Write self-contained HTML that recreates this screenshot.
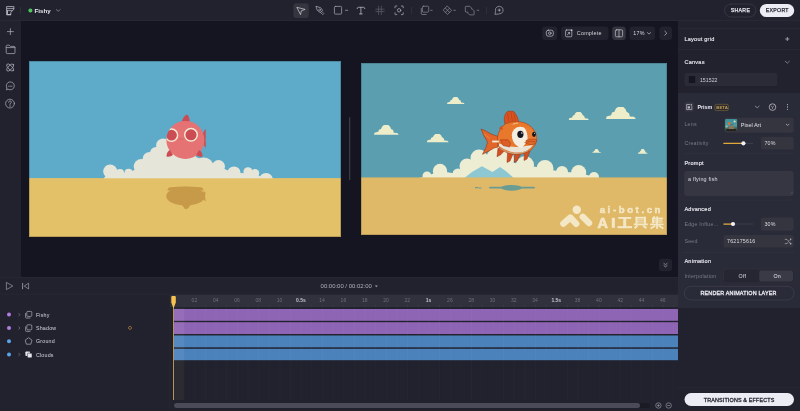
<!DOCTYPE html>
<html><head><meta charset="utf-8">
<style>
*{box-sizing:border-box;margin:0;padding:0}
html,body{width:800px;height:411px;overflow:hidden;background:#151522;font-family:"Liberation Sans",sans-serif}
svg{position:absolute;left:0;top:0;will-change:transform}
text{font-family:"Liberation Sans",sans-serif}
</style></head><body>
<svg width="800" height="411" viewBox="0 0 800 411">
<!-- ===== PANELS ===== -->
<rect x="0" y="0" width="800" height="411" fill="#151522"/>
<rect x="0" y="0" width="800" height="20" fill="#22222e"/>
<rect x="0" y="20" width="800" height="1" fill="#282834"/>
<rect x="0" y="21" width="21" height="256" fill="#22222e"/>
<rect x="678" y="21" width="122" height="390" fill="#22222e"/>
<rect x="0" y="277" width="678" height="134" fill="#22222e"/>

<!-- ===== TOP BAR ===== -->
<g id="topbar" fill="none" stroke="#c9c9d3" stroke-width="0.8" stroke-linecap="round" stroke-linejoin="round">
  <!-- logo -->
  <path d="M7 6.6H13.9V9.2L10.8 12.4V14.8H7Z" stroke-width="0.75"/>
  <path d="M7.2 8.6H13.6M7.2 10.6H12" stroke-width="0.7"/>
  <path d="M7.4 10.8V14.6H10.6" stroke-width="0.9"/>
  <rect x="20.3" y="7" width="0.7" height="7" fill="#393945" stroke="none"/>
  <circle cx="30.4" cy="10.6" r="2" fill="#4cc75a" stroke="none"/>
  <path d="M56.3 9.6L58.2 11.3L60.1 9.6" stroke="#9a9aa6" stroke-width="0.7"/>
  <!-- toolbar -->
  <rect x="293.4" y="3.2" width="15.3" height="14.9" rx="3" fill="#35353f" stroke="none"/>
  <path d="M297.2 7.4L305.1 9.4L301.4 10.8L300.6 14.2Z" stroke="#d4d4de" stroke-width="0.7"/>
  <!-- pen -->
  <path d="M316.3 6.4L320.6 7.7L322.6 10.3L320.3 12.6L317.6 10.6Z" stroke="#b4b4c0" stroke-width="0.7"/>
  <circle cx="319.6" cy="9.9" r="0.9" stroke="#b4b4c0" stroke-width="0.6"/>
  <path d="M321.6 11.3L323.9 13.6L322.8 14.7L320.5 12.4" stroke="#b4b4c0" stroke-width="0.6"/>
  <!-- rect -->
  <rect x="334.4" y="6.4" width="7.2" height="7.7" rx="1" stroke="#9d9da9" stroke-width="0.8"/>
  <path d="M345.4 10.3H347.8" stroke="#a4a4b0" stroke-width="0.7"/>
  <!-- T -->
  <path d="M357.2 8.6Q357.2 7.3 358.4 7.3H363.6Q364.8 7.3 364.8 8.6M360.9 7.3V13.9M359.5 13.9H362.3" stroke="#b4b4c0" stroke-width="0.8"/>
  <!-- grid -->
  <path d="M378.6 6.2V14.6M381.3 6.2V14.6M375.8 9.2H384.2M375.8 11.6H384.2" stroke="#707080" stroke-width="0.55" stroke-dasharray="0.8 0.8"/>
  <!-- focus -->
  <path d="M395 7.8V6.4Q395 6 395.4 6H396.8M401.4 6H402.8Q403.2 6 403.2 6.4V7.8M403.2 12.8V14.2Q403.2 14.6 402.8 14.6H401.4M396.8 14.6H395.4Q395 14.6 395 14.2V12.8" stroke="#a4a4b0" stroke-width="0.8"/>
  <circle cx="399.1" cy="10.3" r="1.7" stroke="#a4a4b0" stroke-width="0.8"/>
  <rect x="411.3" y="7" width="0.6" height="7" fill="#393945" stroke="none"/>
  <g stroke="#8d8d99" stroke-width="0.7">
  <!-- layers -->
  <rect x="422.4" y="6.2" width="6.3" height="6" rx="1"/>
  <path d="M421.3 8.4V13.6Q421.3 14.5 422.2 14.5H426.2"/>
  <path d="M430.6 10.3H432.2"/>
  <!-- component -->
  <path d="M447.5 6.2L451.6 10.3L447.5 14.4L443.4 10.3Z"/>
  <path d="M445.45 8.25L449.55 12.35M449.55 8.25L445.45 12.35"/>
  <path d="M453.8 10.3H455.4"/>
  <!-- boolean -->
  <path d="M465.3 7Q465.3 6.3 466 6.3H469.8L471.6 8.1V9.1H472.4L474.1 10.8V14.2Q474.1 14.9 473.4 14.9H469.6L467.8 13.1V12.1H466Q465.3 12.1 465.3 11.4Z"/>
  <path d="M477.2 10.3H478.8"/>
  </g>
  <rect x="486.2" y="7" width="0.6" height="7" fill="#393945" stroke="none"/>
  <!-- comment -->
  <path d="M495 14L495.6 11.2Q494.8 8.2 497.2 6.8Q499.6 5.6 501.8 7.2Q503.6 8.8 503 11.4Q502 14 499 14Z" stroke="#a9a9b5" stroke-width="0.7"/>
  <path d="M499.3 8.9V11.3M498.1 10.1H500.5" stroke="#c4c4ce" stroke-width="0.6"/>
  <!-- share / export -->
  <rect x="724.5" y="4" width="31.4" height="13" rx="6.5" stroke="#3a3a48" stroke-width="0.8"/>
  <rect x="759.8" y="4" width="34.4" height="13" rx="6.5" fill="#ececf4" stroke="none"/>
</g>
<text x="34.6" y="13" font-size="6.2" font-weight="bold" fill="#e8e8f0">Fishy</text>
<text x="730.8" y="12.4" font-size="5.2" fill="#e4e4ec" stroke="#e4e4ec" stroke-width="0.25" letter-spacing="0.3">SHARE</text>
<text x="765.8" y="12.4" font-size="5.2" fill="#262632" stroke="#262632" stroke-width="0.25" letter-spacing="0.3">EXPORT</text>

<!-- ===== LEFT SIDEBAR ===== -->
<g fill="none" stroke="#a9a9b5" stroke-width="0.75" stroke-linecap="round" stroke-linejoin="round">
  <path d="M10.4 28.6V34.6M7.4 31.6H13.4"/>
  <path d="M6.2 46.2Q6.2 45.2 7.2 45.2H9.2L10.4 46.4H14Q15 46.4 15 47.4V52.6Q15 53.6 14 53.6H7.2Q6.2 53.6 6.2 52.6Z"/>
  <path d="M6.2 47.6H15"/>
  <ellipse cx="10.2" cy="67.5" rx="4.6" ry="2" transform="rotate(45 10.2 67.5)"/>
  <ellipse cx="10.2" cy="67.5" rx="4.6" ry="2" transform="rotate(-45 10.2 67.5)"/>
  <path d="M6.6 89.6L6.9 88A4 4 0 1 1 8.2 89.3Z"/>
  <path d="M8.3 86.2H8.5M9.6 86.2H12" stroke-width="0.7"/>
  <circle cx="10" cy="103.6" r="4.4"/>
  <path d="M8.6 102.4Q8.6 100.9 10 100.9Q11.4 100.9 11.4 102.2Q11.4 103.1 10 103.7V104.5" stroke-width="0.7"/>
  <circle cx="10" cy="106" r="0.2" stroke-width="0.6"/>
</g>

<!-- ===== CANVAS ===== -->
<defs>
  <clipPath id="clipL"><rect x="29" y="61" width="312" height="176"/></clipPath>
  <clipPath id="clipR"><rect x="361" y="63" width="306" height="172"/></clipPath>
</defs>
<g clip-path="url(#clipL)">
  <rect x="29" y="61" width="312" height="176" fill="#5eaac9"/>
  <rect x="29" y="178.3" width="312" height="59" fill="#e3c168"/>
  <g fill="#e6e5d9">
    <circle cx="110.2" cy="171.4" r="7"/>
    <circle cx="120" cy="173" r="4.1"/>
    <circle cx="128.6" cy="172.8" r="4.1"/>
    <circle cx="141.3" cy="166.5" r="7.6"/>
    <circle cx="149.8" cy="159.2" r="7.3"/>
    <circle cx="156" cy="153" r="6"/>
    <circle cx="163.2" cy="145.6" r="7.1"/>
    <circle cx="185" cy="150" r="12"/>
    <circle cx="203.5" cy="168" r="10.6"/>
    <circle cx="218.5" cy="166.6" r="6.5"/>
    <circle cx="234" cy="173" r="6.6"/>
    <circle cx="248" cy="171.8" r="4.6"/>
    <circle cx="255" cy="173.2" r="4.2"/>
    <circle cx="266" cy="180" r="7"/>
    <path d="M110.2 171.4L120 173L128.6 172.8L141.3 166.5L149.8 159.2L163.2 145.6L190 146L196 157L218.5 166.6L234 173L255 173.2L266 180L266 179L103 179Z"/>
  </g>
  <rect x="29" y="178.3" width="312" height="59" fill="#e3c168"/>
  <!-- shadow -->
  <g fill="#c79a49">
    <ellipse cx="185.6" cy="196.2" rx="19.3" ry="9.4"/>
    <path d="M167.6 190.6Q167.4 187.4 170.5 187.2Q185.5 185.6 200.5 187.2Q203.6 187.4 203.6 190.6Z"/>
    <path d="M203.5 191L205.6 192.6L205 196.8L205.8 201.2L203 199.5Z"/>
    <path d="M181 204.6Q183.4 206 184.4 208.4Q186.6 209.8 188.6 207.8Q189.2 205.8 191.8 204.6Z"/>
  </g>
  <!-- fish -->
  <defs><clipPath id="fishBody"><circle cx="185.4" cy="139.9" r="19"/></clipPath></defs>
  <g>
    <path d="M181.5 122.5Q183 116 187.2 114.6Q189.8 117 189.6 122.5Z" fill="#cb4c53"/>
    <path d="M203 133Q205.2 129 205.8 129Q205.4 139 205.9 148Q204.6 146 203 144Z" fill="#cb4c53"/>
    <circle cx="185.4" cy="139.9" r="19" fill="#e57373"/>
    <path d="M166.5 156.5Q166.5 151.5 170 150L173 155Q170 157.5 166.5 156.5Z" fill="#cb4c53"/>
    <path d="M202.6 156.5Q202.6 151.5 199 150L196.2 155Q199 157.5 202.6 156.5Z" fill="#cb4c53"/>
    <g clip-path="url(#fishBody)">
      <circle cx="171.5" cy="135.2" r="6.1" fill="#cb4c53" stroke="#f4e8d4" stroke-width="1.5"/>
    </g>
    <circle cx="191" cy="134.8" r="6.3" fill="#cb4c53" stroke="#f4e8d4" stroke-width="1.5"/>
    <path d="M179 138.9H183.4" stroke="#cf5a5f" stroke-width="0.5"/>
  </g>
  <rect x="29.5" y="61.5" width="311" height="175" fill="none" stroke="#000" stroke-opacity="0.18" stroke-width="1"/>
</g>

<!-- right image -->
<g clip-path="url(#clipR)">
  <rect x="361" y="63" width="306" height="172" fill="#5b9eb0"/>
  <!-- small clouds -->
  <g fill="#eeedc9">
    <polygon points="374.0,134.8 374.5,132.7 378.2,131.8 379.0,129.7 380.9,128.9 382.2,126.4 383.9,125.1 388.4,125.1 390.1,126.7 391.1,128.9 393.1,130.1 393.8,132.7 397.3,133.1 398.8,134.8"/>
    <polygon points="447.0,104.0 447.4,102.5 450.0,101.8 450.5,100.3 451.9,99.7 452.8,97.9 454.0,97.0 457.2,97.0 458.4,98.2 459.1,99.7 460.6,100.6 461.1,102.5 463.5,102.7 464.6,104.0"/>
    <polygon points="426.9,142.2 427.3,140.4 430.6,139.6 431.3,137.8 433.0,137.1 434.1,135.0 435.6,133.9 439.5,133.9 441.1,135.3 441.9,137.1 443.7,138.2 444.3,140.4 447.4,140.7 448.7,142.2"/>
    <polygon points="568.8,120.0 569.2,118.2 572.2,117.5 572.8,115.8 574.4,115.1 575.4,113.0 576.8,112.0 580.5,112.0 581.9,113.4 582.7,115.1 584.3,116.2 584.9,118.2 587.7,118.6 588.9,120.0"/>
    <polygon points="606.0,119.0 606.6,116.4 611.1,115.3 612.0,112.6 614.4,111.7 615.9,108.6 618.0,107.0 623.3,107.0 625.4,109.0 626.6,111.7 629.0,113.2 629.9,116.4 634.1,116.8 635.9,119.0"/>
    <polygon points="592.4,152.8 592.6,151.9 593.8,151.6 594.1,150.7 594.8,150.4 595.2,149.4 595.8,148.9 597.3,148.9 597.9,149.6 598.3,150.4 598.9,150.9 599.2,151.9 600.4,152.1 600.9,152.8"/>
    <polygon points="638.1,153.7 638.3,152.6 639.7,152.2 640.0,151.2 640.8,150.8 641.2,149.5 641.9,148.9 643.6,148.9 644.3,149.7 644.7,150.8 645.4,151.4 645.7,152.6 647.0,152.8 647.6,153.7"/>
  </g>
  <!-- big cloud -->
  <g fill="#ecedd2">
    <circle cx="427" cy="176" r="4.5"/>
    <circle cx="440" cy="171" r="7.2"/>
    <circle cx="458" cy="174" r="5.5"/>
    <circle cx="467" cy="166" r="7.5"/>
    <circle cx="479" cy="158" r="8.5"/>
    <circle cx="500" cy="160" r="14"/>
    <circle cx="525" cy="165" r="9"/>
    <circle cx="545" cy="168.5" r="8.5"/>
    <circle cx="562" cy="172" r="6"/>
    <circle cx="578.7" cy="172.5" r="7.5"/>
    <circle cx="594" cy="177" r="5"/>
    <path d="M419.4 178L427 176L440 171L458 174L467 166L479 158L500 160L525 165L545 168.5L562 172L578.7 172.5L594 177L600 178Z"/>
  </g>
  <!-- mountain -->
  <path d="M464.4 178L472 172L481.9 166.3L492.5 172L500 166.9L507 172L513.8 178Z" fill="#8cc7d2"/>
  <!-- sand -->
  <rect x="361" y="177.4" width="306" height="58" fill="#dfb967"/>
  <path d="M361 177.6H419M600 177.6H667" stroke="#a7ab7c" stroke-width="0.8" stroke-dasharray="0.8 0.6"/>
  <!-- shadow -->
  <g fill="#6a9c94">
    <ellipse cx="511.5" cy="187.8" rx="10.5" ry="2.9"/>
    <rect x="489" y="186.8" width="46" height="1.6" rx="0.8"/>
    <rect x="475" y="187" width="3.5" height="1.2"/>
    <rect x="479" y="187.6" width="2.5" height="1"/>
  </g>
  <!-- fish -->
  <g stroke-linejoin="round">
    <!-- dorsal -->
    <path d="M504.6 123.5L504.2 118Q505 113 507.5 111.4Q511 110.6 514 111.6Q517 115 518.6 120.8L517 123.5Z" fill="#d9531f" stroke="#9a3516" stroke-width="0.5"/>
    <path d="M507.5 113L509 121.5M510.8 112L512.5 121.5M513.8 112.5L515.5 121.5" stroke="#b8401a" stroke-width="0.7"/>
    <!-- tail -->
    <path d="M498 136.5L491 134L485 130.5L481 129L484 136L487.5 142L486 147.5L482.5 154.3L489 151L494 148L498 147Z" fill="#e2652a" stroke="#9a3516" stroke-width="0.6"/>
    <path d="M484 134L490 138.5" stroke="#f08a45" stroke-width="0.8"/>
    <!-- bottom fins -->
    <path d="M498 148L497 156.8L501 154.5L505 150Z" fill="#d24f22" stroke="#9a3516" stroke-width="0.5"/>
    <path d="M507.5 153L507 162.5L510 161L513 154Z" fill="#d24f22" stroke="#9a3516" stroke-width="0.5"/>
    <path d="M515 153.5L514.2 162.3L517 161L520.5 154Z" fill="#d24f22" stroke="#9a3516" stroke-width="0.5"/>
    <path d="M524.5 152L524 160.5L527 159L530 151Z" fill="#d24f22" stroke="#9a3516" stroke-width="0.5"/>
    <!-- body -->
    <path d="M497.5 137Q499 128 506 123.5Q512 121.2 519 121.6Q527 122.5 532.5 128Q537 133 536.8 139.5Q536 146 530 151Q523 155 514 154.5Q504 153 499 147Q497 142 497.5 137Z" fill="#e8782c" stroke="#a83c18" stroke-width="0.6"/>
    <path d="M499 128.6L501.5 125.8L503 130Z" fill="#d24f22"/>
    <!-- belly -->
    <path d="M499 146Q504 150 512 152Q520 153.5 526 151Q531 148.5 533 145L526 146Q518 147.5 510 146.5Q504 145.5 499 143.5Z" fill="#e9e4d6"/>
    <path d="M500 148.5Q506 152.5 514 153.5Q522 154 528 150.5" stroke="#b9b3a5" stroke-width="0.8" fill="none"/>
    <!-- face white -->
    <circle cx="520.2" cy="135.2" r="8.4" fill="#f3eedf"/>
    <path d="M512 137Q513 146 522 148L526 143Q518 142 516 136Z" fill="#f3eedf"/>
    <!-- head top orange over white -->
    <path d="M523.5 126.6Q531 128 535.8 133.5L536.6 139.5Q531 140 527.6 138.5Q527.5 131 523.5 126.6Z" fill="#ea7e33"/>
    <!-- highlight streak -->
    <path d="M512.8 124.4Q515 123 518 123" stroke="#f7c99a" stroke-width="0.9" fill="none"/>
    <!-- eyes -->
    <ellipse cx="520.4" cy="134.3" rx="3.1" ry="3.6" fill="#15151d"/>
    <circle cx="521.8" cy="133" r="0.8" fill="#e8eef8"/>
    <ellipse cx="534" cy="134.3" rx="1.9" ry="2.6" fill="#15151d"/>
    <circle cx="534.5" cy="133.3" r="0.5" fill="#e8eef8"/>
    <!-- lips -->
    <path d="M526 140.5Q531 138.2 536.5 139.3Q537.3 142 535 144Q530 145.5 526 143.5Z" fill="#e06a2a" stroke="#9a3516" stroke-width="0.5"/>
    <path d="M527.5 141.8Q531 141 535.5 141.6" stroke="#9a3516" stroke-width="0.5" fill="none"/>
    <!-- side fin -->
    <path d="M500.4 139.8L508 139.8L510.5 143L509.5 147L503 145.5Z" fill="#dd5e26" stroke="#9a3516" stroke-width="0.5"/>
    <path d="M492.2 141.5H498.8" stroke="#f4ede0" stroke-width="1.8"/>
  </g>
  <!-- watermark -->
  <g fill="#f4e7c6">
    <circle cx="576.8" cy="209.7" r="4.2"/>
    <path d="M563.4 223.6L570.2 217.6L576.2 223.8" fill="none" stroke="#f4e7c6" stroke-width="6.4" stroke-linecap="round" stroke-linejoin="round"/>
    <path d="M582.8 216.8L589 223" fill="none" stroke="#f4e7c6" stroke-width="6.4" stroke-linecap="round"/>
    <text x="599.7" y="213.2" font-size="9.6" font-weight="bold" letter-spacing="2.6" stroke="#f4e7c6" stroke-width="0.45" font-family="Liberation Sans">ai-bot.cn</text>
    <text x="597.6" y="227.8" font-size="14.4" font-weight="bold" stroke="#f4e7c6" stroke-width="0.7" font-family="Liberation Sans">A</text>
    <rect x="611.8" y="217.8" width="3.1" height="10"/>
    <!-- 工 -->
    <rect x="618.4" y="217" width="12.8" height="1.9"/>
    <rect x="623.2" y="217" width="3" height="10"/>
    <rect x="617.5" y="226.1" width="14.5" height="2.1"/>
    <!-- 具 -->
    <rect x="635.5" y="216.8" width="10.5" height="1.8"/>
    <rect x="635.5" y="216.8" width="2" height="7"/>
    <rect x="644" y="216.8" width="2" height="7"/>
    <rect x="636.5" y="219.4" width="8" height="1"/>
    <rect x="636.5" y="221.4" width="8" height="1"/>
    <rect x="633.8" y="223.5" width="14" height="1.8"/>
    <path d="M637.4 225.5L634.6 228.2M643.2 225.5L646.4 228.2" stroke="#f4e7c6" stroke-width="2"/>
    <!-- 集 -->
    <path d="M654.6 216.2L653 218.6" stroke="#f4e7c6" stroke-width="1.6"/>
    <rect x="652" y="217.6" width="1.9" height="5.8"/>
    <rect x="653" y="217.6" width="10" height="1.4"/>
    <rect x="653" y="219.5" width="9.5" height="1.2"/>
    <rect x="653" y="221.4" width="9.5" height="1.2"/>
    <rect x="656.3" y="216.4" width="1.7" height="6"/>
    <rect x="650" y="223.6" width="13.5" height="1.6"/>
    <rect x="656.1" y="222" width="1.8" height="6.8"/>
    <path d="M655.4 225.4L650.6 228.4M658.6 225.4L663.4 228.4" stroke="#f4e7c6" stroke-width="1.8"/>
  </g>
  <rect x="361.5" y="63.5" width="305" height="171" fill="none" stroke="#000" stroke-opacity="0.15" stroke-width="1"/>
</g>
<!-- canvas scrollbar -->
<rect x="349" y="117" width="1.3" height="63" rx="0.6" fill="#3a3a48"/>

<!-- ===== RIGHT PANEL ===== -->
<rect x="678" y="28" width="122" height="0.8" fill="#2b2b37"/>
<text letter-spacing="0.22" x="684.4" y="40.9" font-size="5.6" fill="#e2e2ea" stroke="#e4e4ec" stroke-width="0.16">Layout grid</text>
<path d="M787.3 37V41M785.3 39H789.3" stroke="#b4b4c0" stroke-width="0.8"/>
<rect x="678" y="49.2" width="122" height="0.8" fill="#2b2b37"/>
<text letter-spacing="0.22" x="684.4" y="64.4" font-size="5.6" fill="#e2e2ea" stroke="#e4e4ec" stroke-width="0.16">Canvas</text>
<path d="M785 61L787.3 63.2L789.6 61" stroke="#9d9daa" stroke-width="0.7" fill="none"/>
<rect x="684.5" y="73.1" width="92.8" height="12.8" rx="2.2" fill="#2b2b38"/>
<rect x="688.8" y="75.9" width="6.4" height="7.1" rx="0.6" fill="#151522"/>
<text letter-spacing="0.05" x="699.9" y="81.9" font-size="5.2" fill="#cfcfd8">151522</text>
<!-- prism -->
<rect x="678" y="93" width="122" height="215" fill="#2a2b38"/>
<rect x="684.9" y="102.3" width="8.7" height="9.3" rx="1.5" fill="#383845"/>
<g fill="none" stroke="#b9b9c5" stroke-width="0.7">
  <path d="M690.2 104.5H686.6V109.5H691.8V106.2"/>
</g>
<rect x="687.7" y="106.3" width="2.3" height="2.2" fill="#b9b9c5"/>
<rect x="690.7" y="104.2" width="1.3" height="1.3" fill="#b9b9c5"/>
<text x="697.5" y="109.3" font-size="5.3" font-weight="bold" fill="#ececf2">Prism</text>
<rect x="714.8" y="104.3" width="13.6" height="6.3" rx="1.6" fill="#2f2b2a" stroke="#7c6a40" stroke-width="0.6"/>
<text x="716.2" y="109.2" font-size="4.3" font-weight="bold" fill="#bf9f5c" letter-spacing="0.1">BETA</text>
<path d="M755 105.9L757.2 107.8L759.4 105.9" stroke="#a9a9b5" stroke-width="0.7" fill="none"/>
<circle cx="772.5" cy="107.1" r="3.3" stroke="#c0c0ca" stroke-width="0.75" fill="none"/>
<path d="M770.8 105.6L772.5 107.4L774.2 105.6M772.5 107.4V109" stroke="#c0c0ca" stroke-width="0.6" fill="none"/>
<g fill="#c0c0ca"><circle cx="787.5" cy="104.6" r="0.55"/><circle cx="787.5" cy="106.9" r="0.55"/><circle cx="787.5" cy="109.2" r="0.55"/></g>

<text letter-spacing="0.22" x="684.4" y="126.3" font-size="5.3" fill="#7a7a88">Lens</text>
<rect x="724.2" y="117.8" width="69.5" height="14.9" rx="2.2" fill="#35353f"/>
<defs><linearGradient id="thg" x1="0" y1="0" x2="0" y2="1"><stop offset="0" stop-color="#3d8f9c"/><stop offset="0.55" stop-color="#4e9a9c"/><stop offset="1" stop-color="#3a3428"/></linearGradient></defs>
<rect x="725.1" y="119.1" width="12" height="11.8" rx="1" fill="url(#thg)"/>
<circle cx="734.6" cy="121.4" r="1" fill="#e8e6b8"/>
<circle cx="726.6" cy="126.6" r="1.2" fill="#9fd0c8" opacity="0.7"/>
<path d="M729.5 126L733.5 125.5L734 129.5L728.5 129.5Z" fill="#8a7656"/>
<path d="M727.8 122.4Q729 121.6 730.4 122.2L730.8 124.4L729 125.2L728 124.2Z" fill="#d4703a"/>
<path d="M730 125L733.4 124.4" stroke="#3a5a8a" stroke-width="0.7"/>
<rect x="726.4" y="129" width="9.6" height="1.9" fill="#1e1a16" opacity="0.8"/>
<text x="740.8" y="127.2" font-size="5.5" fill="#e2e2ea">Pixel Art</text>
<path d="M786 124L787.6 125.4L789.2 124" stroke="#c4c4ce" stroke-width="0.7" fill="none"/>

<text letter-spacing="0.22" x="684.4" y="145.3" font-size="5.3" fill="#7a7a88">Creativity</text>
<rect x="723.3" y="142.9" width="29.7" height="0.8" fill="#454552"/>
<rect x="723.3" y="142.7" width="20" height="1.3" rx="0.6" fill="#e0a83a"/>
<circle cx="743.4" cy="143.3" r="2.1" fill="#f2f2f6"/>
<rect x="761" y="137" width="32.7" height="12.6" rx="2.2" fill="#35353f"/>
<text letter-spacing="0.22" x="764.4" y="145.3" font-size="5.3" fill="#dcdce4">70%</text>
<rect x="684" y="153.5" width="110" height="0.6" fill="#34343f"/>

<text letter-spacing="0.22" x="684.4" y="164.6" font-size="5.6" fill="#e8e8f0" stroke="#e4e4ec" stroke-width="0.16">Prompt</text>
<rect x="684.2" y="171" width="109.5" height="24.9" rx="2.6" fill="#363643"/>
<text letter-spacing="0.22" x="688" y="180.7" font-size="5.4" fill="#dedee6">a flying fish</text>
<path d="M790.6 193.8L792.8 191.6M791.8 193.8L792.8 192.8" stroke="#6a6a78" stroke-width="0.4"/>
<rect x="684" y="199.8" width="110" height="0.6" fill="#34343f"/>

<text letter-spacing="0.22" x="684.4" y="211" font-size="5.6" fill="#e8e8f0" stroke="#e4e4ec" stroke-width="0.16">Advanced</text>
<text letter-spacing="0.22" x="684.4" y="226" font-size="5.3" fill="#7a7a88">Edge Influe...</text>
<rect x="723.3" y="223.6" width="29.7" height="0.8" fill="#454552"/>
<rect x="723.3" y="223.4" width="10" height="1.3" rx="0.6" fill="#e0a83a"/>
<circle cx="733" cy="224" r="2.1" fill="#f2f2f6"/>
<rect x="761" y="217.4" width="32.7" height="13.3" rx="2.2" fill="#35353f"/>
<text letter-spacing="0.22" x="764.4" y="226" font-size="5.3" fill="#dcdce4">30%</text>

<text letter-spacing="0.22" x="684.4" y="243.4" font-size="5.3" fill="#7a7a88">Seed</text>
<rect x="723.6" y="235" width="70.1" height="12.6" rx="2.2" fill="#35353f"/>
<text letter-spacing="0.22" x="727" y="243.4" font-size="5.3" fill="#dcdce4">762175616</text>
<g stroke="#c4c4ce" stroke-width="0.6" fill="none">
  <path d="M784.8 239.3H786Q787.2 239.3 788 240.5L789.2 242.5Q790 243.7 791.2 243.7H790.4M784.8 243.7H786Q787.2 243.7 788 242.5M789.2 240.5Q790 239.3 791.2 239.3"/>
  <path d="M790.2 238.5L791.2 239.3L790.2 240.1M790.2 242.9L791.2 243.7L790.2 244.5"/>
</g>
<rect x="684" y="252" width="110" height="0.6" fill="#34343f"/>

<text letter-spacing="0.22" x="684.4" y="263" font-size="5.6" fill="#e8e8f0" stroke="#e4e4ec" stroke-width="0.16">Animation</text>
<text letter-spacing="0.22" x="684.4" y="278" font-size="5.3" fill="#7a7a88">Interpolation</text>
<rect x="723.5" y="269.2" width="70.6" height="13.6" rx="2.6" fill="#262632" stroke="#34343f" stroke-width="0.5"/>
<rect x="759.2" y="270.5" width="33.8" height="11" rx="2" fill="#3a3a47"/>
<text letter-spacing="0.22" x="738.6" y="278" font-size="5.3" fill="#dcdce4">Off</text>
<text letter-spacing="0.22" x="773.4" y="278" font-size="5.3" fill="#e6e6ee">On</text>
<rect x="684.3" y="286.3" width="109.8" height="13.7" rx="6.85" fill="none" stroke="#454552" stroke-width="0.6"/>
<text x="700.5" y="295" font-size="5.4" fill="#e8e8f0" stroke="#e8e8f0" stroke-width="0.3" letter-spacing="0.17">RENDER ANIMATION LAYER</text>

<rect x="678" y="387.3" width="122" height="0.6" fill="#2c2c38"/>
<rect x="684.5" y="393" width="109.5" height="13" rx="6.5" fill="#ececf4"/>
<text x="703.7" y="401.9" font-size="5.4" fill="#2a2a36" stroke="#2a2a36" stroke-width="0.3" letter-spacing="0.16">TRANSITIONS &amp; EFFECTS</text>

<!-- ===== CANVAS TOOLBAR ===== -->
<g fill="#22222e">
  <rect x="542.2" y="26.5" width="15" height="13.5" rx="3"/>
  <rect x="561.2" y="26.5" width="47.3" height="13.5" rx="3"/>
  <rect x="612.2" y="26.5" width="13.5" height="13.5" rx="3" fill="#34343f"/>
  <rect x="629.5" y="26.5" width="25.5" height="13.5" rx="3"/>
  <rect x="659.5" y="26.5" width="12.5" height="13.5" rx="3"/>
  <rect x="659" y="258.8" width="13" height="12.4" rx="3"/>
</g>
<g fill="none" stroke="#c4c4ce" stroke-width="0.7" stroke-linecap="round" stroke-linejoin="round">
  <rect x="546.3" y="30.2" width="7" height="6" rx="2"/>
  <circle cx="549.8" cy="33.2" r="1.3"/>
  <rect x="565.6" y="30" width="6.2" height="6.8" rx="1"/>
  <path d="M567.4 34.8L569.6 32.6M568.2 32.6H569.6V34"/>
  <circle cx="571.6" cy="30.2" r="0.9" fill="#c4c4ce" stroke="none"/>
  <rect x="615.4" y="29.8" width="7.2" height="7" rx="1.2"/>
  <path d="M619 29.8V36.8"/>
  <path d="M647.4 32.6L649 34.1L650.6 32.6"/>
  <path d="M664.8 31.2L666.8 33.2L664.8 35.2"/>
  <path d="M663.9 263.4L665.5 264.7L667.1 263.4M663.9 265.6L665.5 266.9L667.1 265.6" stroke-width="0.6"/>
</g>
<text letter-spacing="0.22" x="576.8" y="35.4" font-size="5.4" fill="#d6d6de">Complete</text>
<text letter-spacing="0.22" x="633.3" y="35.4" font-size="5.4" fill="#d6d6de">17%</text>

<!-- ===== TIMELINE ===== -->
<rect x="0" y="277" width="678" height="0.6" fill="#2a2a36"/>
<g fill="none" stroke="#9c9ca8" stroke-width="0.7" stroke-linejoin="round">
  <path d="M6.4 282.4L12.8 286L6.4 289.6Z"/>
  <path d="M22.6 283V289.2" stroke-width="0.9"/>
  <path d="M28.6 283.2L24.2 286.1L28.6 289Z"/>
</g>
<text x="320.6" y="288.2" font-size="5.95" fill="#b4b4c0">00:00:00 / 00:02:00</text>
<path d="M374.8 285.6H377.8L376.3 287.2Z" fill="#a4a4b0"/>
<rect x="0" y="293.8" width="678" height="0.6" fill="#2c2c38"/>
<rect x="170" y="294.8" width="508" height="12.4" fill="#31313d"/>
<path d="M184.10 305V306.8M194.75 305V306.8M205.39 305V306.8M216.03 305V306.8M226.68 305V306.8M237.32 305V306.8M247.97 305V306.8M258.62 305V306.8M269.26 305V306.8M279.90 305V306.8M290.55 305V306.8M301.19 305V306.8M311.84 305V306.8M322.49 305V306.8M333.13 305V306.8M343.77 305V306.8M354.42 305V306.8M365.06 305V306.8M375.71 305V306.8M386.36 305V306.8M397.00 305V306.8M407.64 305V306.8M418.29 305V306.8M428.93 305V306.8M439.58 305V306.8M450.23 305V306.8M460.87 305V306.8M471.51 305V306.8M482.16 305V306.8M492.80 305V306.8M503.45 305V306.8M514.10 305V306.8M524.74 305V306.8M535.38 305V306.8M546.03 305V306.8M556.67 305V306.8M567.32 305V306.8M577.97 305V306.8M588.61 305V306.8M599.25 305V306.8M609.90 305V306.8M620.54 305V306.8M631.19 305V306.8M641.83 305V306.8M652.48 305V306.8M663.12 305V306.8M673.77 305V306.8" stroke="#4a4a56" stroke-width="0.5"/>
<text x="194.4" y="302" font-size="5" fill="#6f6f7b" text-anchor="middle" font-family="Liberation Mono">02</text>
<text x="215.7" y="302" font-size="5" fill="#6f6f7b" text-anchor="middle" font-family="Liberation Mono">04</text>
<text x="237.0" y="302" font-size="5" fill="#6f6f7b" text-anchor="middle" font-family="Liberation Mono">06</text>
<text x="258.3" y="302" font-size="5" fill="#6f6f7b" text-anchor="middle" font-family="Liberation Mono">08</text>
<text x="279.6" y="302" font-size="5" fill="#6f6f7b" text-anchor="middle" font-family="Liberation Mono">10</text>
<text x="300.9" y="302" font-size="5" font-weight="bold" fill="#c4c4ce" text-anchor="middle" font-family="Liberation Mono">0.5s</text>
<text x="322.1" y="302" font-size="5" fill="#6f6f7b" text-anchor="middle" font-family="Liberation Mono">14</text>
<text x="343.4" y="302" font-size="5" fill="#6f6f7b" text-anchor="middle" font-family="Liberation Mono">16</text>
<text x="364.7" y="302" font-size="5" fill="#6f6f7b" text-anchor="middle" font-family="Liberation Mono">18</text>
<text x="386.0" y="302" font-size="5" fill="#6f6f7b" text-anchor="middle" font-family="Liberation Mono">20</text>
<text x="407.3" y="302" font-size="5" fill="#6f6f7b" text-anchor="middle" font-family="Liberation Mono">22</text>
<text x="428.6" y="302" font-size="5" font-weight="bold" fill="#c4c4ce" text-anchor="middle" font-family="Liberation Mono">1s</text>
<text x="449.9" y="302" font-size="5" fill="#6f6f7b" text-anchor="middle" font-family="Liberation Mono">26</text>
<text x="471.2" y="302" font-size="5" fill="#6f6f7b" text-anchor="middle" font-family="Liberation Mono">28</text>
<text x="492.5" y="302" font-size="5" fill="#6f6f7b" text-anchor="middle" font-family="Liberation Mono">30</text>
<text x="513.8" y="302" font-size="5" fill="#6f6f7b" text-anchor="middle" font-family="Liberation Mono">32</text>
<text x="535.0" y="302" font-size="5" fill="#6f6f7b" text-anchor="middle" font-family="Liberation Mono">34</text>
<text x="556.3" y="302" font-size="5" font-weight="bold" fill="#c4c4ce" text-anchor="middle" font-family="Liberation Mono">1.5s</text>
<text x="577.6" y="302" font-size="5" fill="#6f6f7b" text-anchor="middle" font-family="Liberation Mono">38</text>
<text x="598.9" y="302" font-size="5" fill="#6f6f7b" text-anchor="middle" font-family="Liberation Mono">40</text>
<text x="620.2" y="302" font-size="5" fill="#6f6f7b" text-anchor="middle" font-family="Liberation Mono">42</text>
<text x="641.5" y="302" font-size="5" fill="#6f6f7b" text-anchor="middle" font-family="Liberation Mono">44</text>
<text x="662.8" y="302" font-size="5" fill="#6f6f7b" text-anchor="middle" font-family="Liberation Mono">46</text>
<rect x="169.6" y="294" width="0.6" height="117" fill="#2a2a34"/>
<rect x="174.2" y="308" width="9.9" height="92" fill="#2c2b31"/>
<path d="M184.10 308V400M194.75 308V400M205.39 308V400M216.03 308V400M226.68 308V400M237.32 308V400M247.97 308V400M258.62 308V400M269.26 308V400M279.90 308V400M290.55 308V400M301.19 308V400M311.84 308V400M322.49 308V400M333.13 308V400M343.77 308V400M354.42 308V400M365.06 308V400M375.71 308V400M386.36 308V400M397.00 308V400M407.64 308V400M418.29 308V400M428.93 308V400M439.58 308V400M450.23 308V400M460.87 308V400M471.51 308V400M482.16 308V400M492.80 308V400M503.45 308V400M514.10 308V400M524.74 308V400M535.38 308V400M546.03 308V400M556.67 308V400M567.32 308V400M577.97 308V400M588.61 308V400M599.25 308V400M609.90 308V400M620.54 308V400M631.19 308V400M641.83 308V400M652.48 308V400M663.12 308V400M673.77 308V400" stroke="#2a2a35" stroke-width="0.5"/>
<!-- bars -->
<rect x="174" y="309" width="504" height="11.8" fill="#8e64b4"/>
<rect x="174" y="322.2" width="504" height="11.8" fill="#8e64b4"/>
<rect x="174" y="335.5" width="504" height="11.8" fill="#4b82bb"/>
<rect x="174" y="348.8" width="504" height="11.4" fill="#4b82bb"/>
<g fill="#ffffff" opacity="0.06">
  <rect x="174" y="309" width="10" height="11.8"/>
  <rect x="174" y="322.2" width="10" height="11.8"/>
  <rect x="174" y="335.5" width="10" height="11.8"/>
  <rect x="174" y="348.8" width="10" height="11.4"/>
</g>
<path d="M184.10 309V360.2M194.75 309V360.2M205.39 309V360.2M216.03 309V360.2M226.68 309V360.2M237.32 309V360.2M247.97 309V360.2M258.62 309V360.2M269.26 309V360.2M279.90 309V360.2M290.55 309V360.2M301.19 309V360.2M311.84 309V360.2M322.49 309V360.2M333.13 309V360.2M343.77 309V360.2M354.42 309V360.2M365.06 309V360.2M375.71 309V360.2M386.36 309V360.2M397.00 309V360.2M407.64 309V360.2M418.29 309V360.2M428.93 309V360.2M439.58 309V360.2M450.23 309V360.2M460.87 309V360.2M471.51 309V360.2M482.16 309V360.2M492.80 309V360.2M503.45 309V360.2M514.10 309V360.2M524.74 309V360.2M535.38 309V360.2M546.03 309V360.2M556.67 309V360.2M567.32 309V360.2M577.97 309V360.2M588.61 309V360.2M599.25 309V360.2M609.90 309V360.2M620.54 309V360.2M631.19 309V360.2M641.83 309V360.2M652.48 309V360.2M663.12 309V360.2M673.77 309V360.2" stroke="#ffffff" stroke-opacity="0.05" stroke-width="0.6"/>
<!-- playhead -->
<rect x="173" y="300" width="1" height="100" fill="#b8945a"/>
<path d="M171.3 296.9Q171.3 295.9 172.3 295.9H174.8Q175.8 295.9 175.8 296.9V302.6L173.5 308.4L171.3 302.6Z" fill="#f6c24f"/>
<!-- scrollbar -->
<rect x="174" y="403" width="476" height="5" rx="2.5" fill="#1b1b25"/>
<rect x="174" y="403" width="466" height="5" rx="2.5" fill="#4a4a58"/>
<g fill="none" stroke="#a4a4b0" stroke-width="0.6">
  <circle cx="658.4" cy="405.5" r="2.7"/><path d="M658.4 404.1V406.9M657 405.5H659.8"/>
  <circle cx="668.7" cy="405.5" r="2.7"/><path d="M667.3 405.5H670.1"/>
</g>
<!-- layer rows -->
<g>
  <circle cx="9" cy="314.6" r="2" fill="#b07de0"/>
  <circle cx="9" cy="328" r="2" fill="#b07de0"/>
  <circle cx="9" cy="341.2" r="2" fill="#58a6ea"/>
  <circle cx="9" cy="354.5" r="2" fill="#58a6ea"/>
</g>
<g fill="none" stroke="#8a8a96" stroke-width="0.6" stroke-linecap="round" stroke-linejoin="round">
  <path d="M18.8 313.4L20 314.6L18.8 315.8M18.8 326.8L20 328L18.8 329.2M18.8 353.3L20 354.5L18.8 355.7"/>
</g>
<g fill="none" stroke="#c8c8d2" stroke-width="0.6" stroke-linejoin="round">
  <rect x="26.8" y="311.4" width="5" height="5" rx="1"/>
  <path d="M25.6 313V317.2Q25.6 318 26.4 318H30.4"/>
  <rect x="26.8" y="324.8" width="5" height="5" rx="1"/>
  <path d="M25.6 326.4V330.6Q25.6 331.4 26.4 331.4H30.4"/>
  <path d="M28.6 337.7L32 340.2L30.8 344.2H26.4L25.2 340.2Z"/>
</g>
<g fill="#e6e6ee">
  <rect x="25.4" y="351.4" width="4.6" height="4.6" rx="0.8"/>
  <rect x="27.4" y="353.2" width="4.6" height="4.6" rx="0.8" stroke="#22222e" stroke-width="0.5"/>
</g>
<text letter-spacing="0.22" x="35.9" y="316.6" font-size="5.3" fill="#d2d2da">Fishy</text>
<text letter-spacing="0.22" x="35.9" y="330" font-size="5.3" fill="#d2d2da">Shadow</text>
<text letter-spacing="0.22" x="35.9" y="343.2" font-size="5.3" fill="#d2d2da">Ground</text>
<text letter-spacing="0.22" x="35.9" y="356.5" font-size="5.3" fill="#d2d2da">Clouds</text>
<circle cx="130" cy="327.9" r="1.5" fill="none" stroke="#c8904a" stroke-width="0.6"/>
</svg>
</body></html>
